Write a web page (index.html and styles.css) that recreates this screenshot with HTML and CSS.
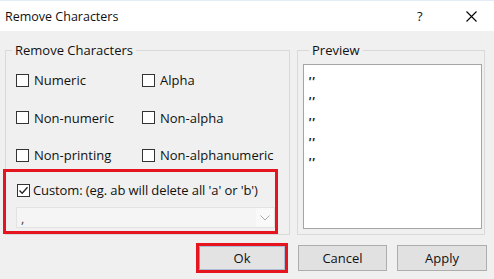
FILE: index.html
```html
<!DOCTYPE html>
<html lang="en">
<head>
    <meta charset="UTF-8">
    <meta name="viewport" content="width=device-width, initial-scale=1.0">
    <title>Remove Characters</title>
    <link rel="stylesheet" href="styles.css">
</head>
<body>

    <div class="titlebar">
        <span class="title">Remove Characters</span>
        <span class="help">?</span>
        <span class="close">
            <svg width="11" height="11" viewBox="0 0 11 11">
                <path d="M0.5 0.5 L10.5 10.5 M10.5 0.5 L0.5 10.5" stroke="#000" stroke-width="1.1" fill="none"/>
            </svg>
        </span>
    </div>

    <div class="content">
        <div class="groups">
            <fieldset class="group group-remove">
                <legend>Remove Characters</legend>

                <div class="options">
                    <label class="check"><span class="box"></span>Numeric</label>
                    <label class="check"><span class="box"></span>Alpha</label>
                    <label class="check"><span class="box"></span>Non-numeric</label>
                    <label class="check"><span class="box"></span>Non-alpha</label>
                    <label class="check"><span class="box"></span>Non-printing</label>
                    <label class="check"><span class="box"></span>Non-alphanumeric</label>
                </div>

                <div class="custom">
                    <label class="check">
                        <span class="box checked">
                            <svg width="11" height="11" viewBox="0 0 11 11">
                                <path d="M1.5 5.5 L4.2 8.3 L9.5 2.2" stroke="#222" stroke-width="1.3" fill="none"/>
                            </svg>
                        </span>Custom: (eg. ab will delete all 'a' or 'b')
                    </label>
                    <div class="combo">
                        <span class="combo-value">,</span>
                        <span class="combo-arrow">
                            <svg width="10" height="6" viewBox="0 0 10 6">
                                <path d="M0.5 0.5 L5 5 L9.5 0.5" stroke="#ababab" stroke-width="1" fill="none"/>
                            </svg>
                        </span>
                    </div>
                </div>
            </fieldset>

            <fieldset class="group group-preview">
                <legend>Preview</legend>
                <div class="preview-list">
                    <div class="preview-row">''</div>
                    <div class="preview-row">''</div>
                    <div class="preview-row">''</div>
                    <div class="preview-row">''</div>
                    <div class="preview-row">''</div>
                </div>
            </fieldset>
        </div>

        <div class="buttons">
            <div class="focus-mark"><button class="btn btn-default">Ok</button></div>
            <button class="btn">Cancel</button>
            <button class="btn btn-apply">Apply</button>
        </div>
    </div>

</body>
</html>
```

FILE: styles.css
```css
body {
    margin: 0;
    width: 494px;
    height: 279px;
    overflow: hidden;
    background-color: #f0f0f0;
    font-family: 'Open Sans', 'Noto Sans', sans-serif;
    font-size: 13px;
    color: #111;
}
.titlebar {
    height: 31px;
    background-color: #ffffff;
    display: flex;
    align-items: center;
    border-top: 1px solid #e3edf7;
    box-sizing: border-box;
}
.title {
    margin-left: 5px;
    font-size: 12.5px;
    flex: 1;
}
.help {
    width: 10px;
    margin-right: 39px;
    font-size: 13px;
}
.close {
    display: flex;
    margin-right: 17px;
}
.content {
    padding: 11px 0 0 5px;
}
.groups {
    display: flex;
    gap: 7px;
}
.group {
    margin: 0;
    padding: 0;
    border: 1px solid #d9d9d9;
    min-width: 0;
}
.group legend {
    padding: 0 3px;
    margin-left: 6px;
    line-height: 16px;
}
.group-remove {
    width: 285px;
    box-sizing: border-box;
}
.group-preview {
    width: 188px;
    box-sizing: border-box;
    padding: 6px 2px 0 5px;
}
.options {
    display: grid;
    grid-template-columns: 126px auto;
    grid-auto-rows: 20px;
    row-gap: 17.5px;
    padding: 12px 0 0 10px;
}
.check {
    display: flex;
    align-items: center;
    gap: 5px;
    height: 20px;
    white-space: nowrap;
}
.box {
    width: 11px;
    height: 11px;
    border: 1px solid #333;
    background-color: #ffffff;
    display: flex;
    align-items: center;
    justify-content: center;
    flex-shrink: 0;
}
.custom {
    margin: 4px 0 0 -3px;
    width: 275px;
    height: 65px;
    box-sizing: border-box;
    border: 3px solid #e5141f;
    padding: 8px 0 3px 11px;
}
.custom .check {
    gap: 3px;
    letter-spacing: -0.1px;
}
.combo {
    margin: 7px 0 0 -1px;
    height: 21px;
    box-sizing: border-box;
    border: 1px solid #e2e2e2;
    background-color: #f5f5f5;
    display: flex;
    align-items: center;
}
.combo-value {
    flex: 1;
    padding-left: 4px;
    color: #444;
}
.combo-arrow {
    width: 18px;
    height: 19px;
    display: flex;
    align-items: center;
    justify-content: center;
    background-color: #f9f9f9;
}
.preview-list {
    height: 165px;
    box-sizing: border-box;
    border: 1px solid #a5a5a5;
    background-color: #ffffff;
    padding: 6px 0 0 4px;
}
.preview-row {
    height: 20.3px;
    line-height: 22px;
    font-size: 12px;
    font-style: italic;
    font-weight: bold;
    letter-spacing: 0.5px;
    color: #222;
}
.buttons {
    display: flex;
    justify-content: flex-end;
    align-items: center;
    gap: 10px;
    margin-top: 8px;
    padding-right: 7px;
}
.focus-mark {
    border: 3px solid #e5141f;
    display: flex;
}
.btn {
    width: 89px;
    height: 26px;
    margin: 0;
    padding: 0;
    background-color: #e1e1e1;
    border: 1px solid #adadad;
    font-family: inherit;
    font-size: 13px;
    color: #111;
}
.btn-default {
    width: 86px;
    height: 24px;
    border-color: #a9bfd6;
    border-left-color: #6d9fd0;
    background-color: #e3e3e3;
}
.btn-apply {
    width: 90px;
}
```
